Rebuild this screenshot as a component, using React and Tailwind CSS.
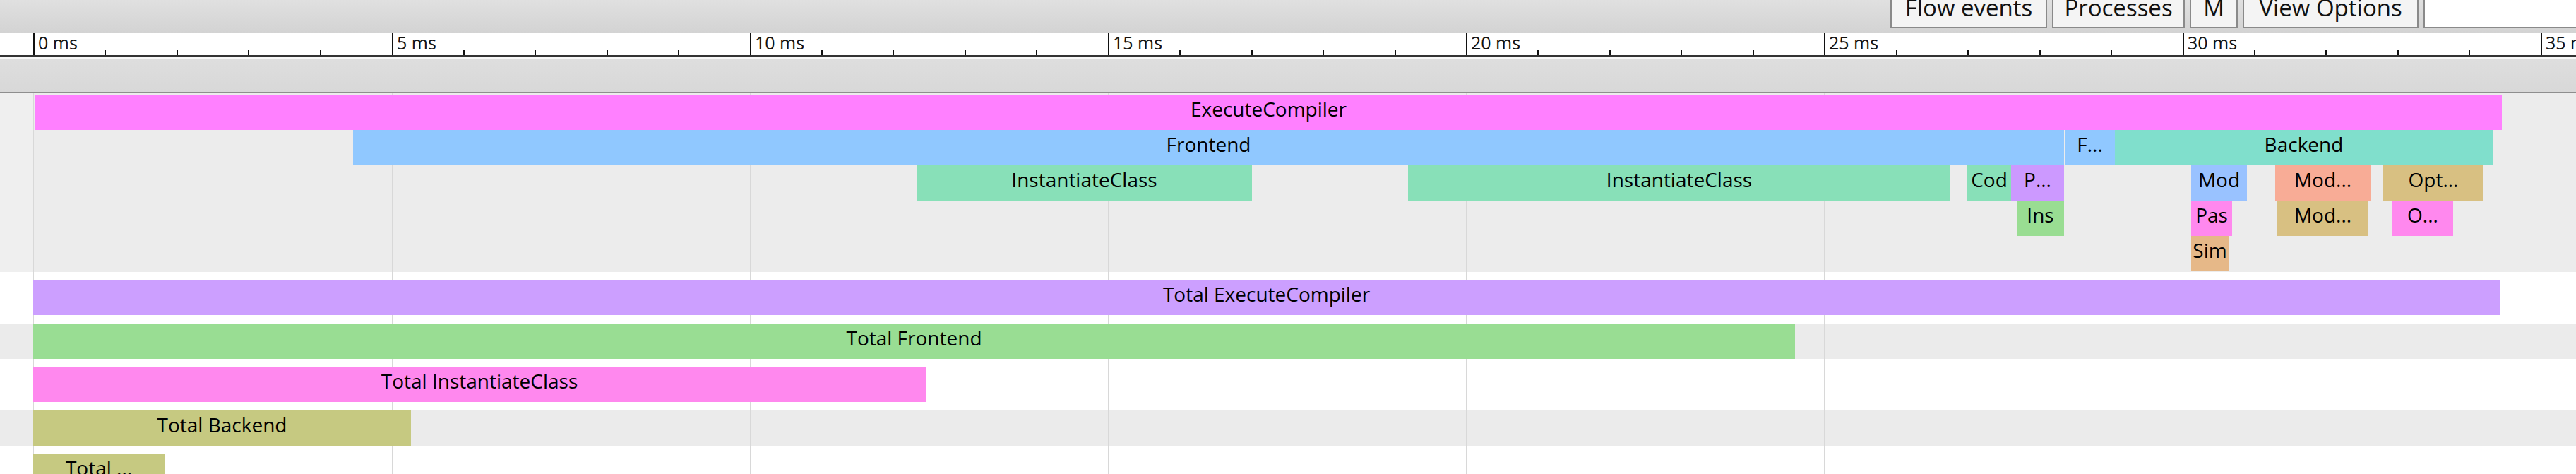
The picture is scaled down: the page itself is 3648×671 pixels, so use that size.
import React from "react";

const FONT = { fontFamily: '"Open Sans", "Noto Sans", sans-serif' };

const majors = [
  { x: 47, label: "0 ms" },
  { x: 555, label: "5 ms" },
  { x: 1062, label: "10 ms" },
  { x: 1569, label: "15 ms" },
  { x: 2076, label: "20 ms" },
  { x: 2583, label: "25 ms" },
  { x: 3091, label: "30 ms" },
  { x: 3598, label: "35 ms" },
];
const minors = [];
for (let i = 0; i < 36; i++) {
  if (i % 5 !== 0) minors.push(Math.round(47 + i * 101.45));
}

const trackRows = [
  [{ l: 50, r: 3543, t: "ExecuteCompiler", c: "#ff80ff" }],
  [
    { l: 500, r: 2923, t: "Frontend", c: "#90c8ff" },
    { l: 2924, r: 2995, t: "F...", c: "#90c8ff" },
    { l: 2995, r: 3530, t: "Backend", c: "#80dfcc" },
  ],
  [
    { l: 1298, r: 1773, t: "InstantiateClass", c: "#88e0b8" },
    { l: 1994, r: 2762, t: "InstantiateClass", c: "#88e0b8" },
    { l: 2786, r: 2848, t: "Cod", c: "#88e0b8" },
    { l: 2848, r: 2923, t: "P...", c: "#cc99ff" },
    { l: 3103, r: 3182, t: "Mod", c: "#99c2ff" },
    { l: 3222, r: 3357, t: "Mod...", c: "#f8ac96" },
    { l: 3375, r: 3517, t: "Opt...", c: "#d8c082" },
  ],
  [
    { l: 2856, r: 2923, t: "Ins", c: "#99dd92" },
    { l: 3103, r: 3161, t: "Pas", c: "#ff88ee" },
    { l: 3225, r: 3354, t: "Mod...", c: "#d8c082" },
    { l: 3388, r: 3474, t: "O...", c: "#ff88ee" },
  ],
  [{ l: 3103, r: 3156, t: "Sim", c: "#e6b888" }],
];

const totals = [
  { r: 3540, t: "Total ExecuteCompiler", c: "#cc9fff", bg: "bg-white" },
  { r: 2542, t: "Total Frontend", c: "#99dd93", bg: "bg-[#ebebeb]" },
  { r: 1311, t: "Total InstantiateClass", c: "#ff88ee", bg: "bg-white" },
  { r: 582, t: "Total Backend", c: "#c6c981", bg: "bg-[#ebebeb]" },
  { r: 233, t: "Total ...", c: "#c6c981", bg: "bg-white" },
];

function Bar({ l, r, t, c }) {
  return (
    <div
      className="absolute z-20 top-0 h-full flex items-center justify-center overflow-hidden whitespace-nowrap text-[28px] text-black leading-none"
      style={{ left: l, width: r - l, background: c }}
    >
      <span className="-mt-[10px]">{t}</span>
    </div>
  );
}

function GridLines() {
  return (
    <>
      {majors.map((m) => (
        <div
          key={m.x}
          className="absolute z-10 top-0 bottom-0 w-px bg-[#d8d8d8]"
          style={{ left: m.x }}
        />
      ))}
    </>
  );
}

function ToolButton({ w, children }) {
  return (
    <div
      className="h-[52px] flex items-end justify-center pb-[11px] border-2 border-[#8a8a8a] bg-[#f4f4f4] text-[33px] leading-none text-[#111] shrink-0"
      style={{ width: w }}
    >
      {children}
    </div>
  );
}

export default function App() {
  return (
    <div className="w-[3648px] h-[671px] overflow-hidden bg-white" style={FONT}>
      {/* toolbar */}
      <div className="h-[47px] overflow-hidden bg-gradient-to-b from-[#e0e0e0] to-[#d3d3d3] flex justify-end items-end pb-[7px]">
        <div className="flex items-end gap-[7px] -mr-[20px]">
          <ToolButton w={222}>Flow events</ToolButton>
          <ToolButton w={188}>Processes</ToolButton>
          <ToolButton w={68}>M</ToolButton>
          <ToolButton w={249}>View Options</ToolButton>
          <div className="h-[52px] w-[236px] border-2 border-[#8a8a8a] bg-white shrink-0" />
        </div>
      </div>

      {/* ruler */}
      <div className="relative h-[33px] bg-white border-b-2 border-[#333]">
        {majors.map((m) => (
          <div key={m.x} className="absolute top-0 bottom-0" style={{ left: m.x }}>
            <div className="absolute left-0 top-0 bottom-0 w-[2px] bg-[#111]" />
            <span className="absolute left-[7px] top-[1px] text-[25px] leading-none text-[#111] whitespace-nowrap">
              {m.label}
            </span>
          </div>
        ))}
        {minors.map((x) => (
          <div
            key={x}
            className="absolute bottom-0 h-[7px] w-[2px] bg-[#111]"
            style={{ left: x }}
          />
        ))}
      </div>

      {/* spacer band */}
      <div className="h-[3px] bg-[#f7f7f7]" />
      <div className="h-[49px] bg-gradient-to-b from-[#dedede] to-[#d8d8d8] border-b-2 border-[#8e8e8e]" />

      {/* tracks */}
      <div className="relative h-[253px] bg-[#ececec] pt-[2px]">
        <div className="absolute left-0 top-0 bottom-0 w-[48px] bg-[#efefef]" />
        <GridLines />
        <div className="flex flex-col">
          {trackRows.map((row, i) => (
            <div key={i} className="relative h-[50px]">
              {row.map((b, j) => (
                <Bar key={j} {...b} />
              ))}
            </div>
          ))}
        </div>
      </div>

      {/* totals */}
      <div className="relative pt-[11px] flex flex-col gap-[11.5px] h-[290px]">
        <GridLines />
        {totals.map((b, i) => (
          <div key={i} className={`relative h-[50px] shrink-0 ${b.bg}`}>
            <Bar l={47} r={b.r} t={b.t} c={b.c} />
          </div>
        ))}
      </div>
    </div>
  );
}
